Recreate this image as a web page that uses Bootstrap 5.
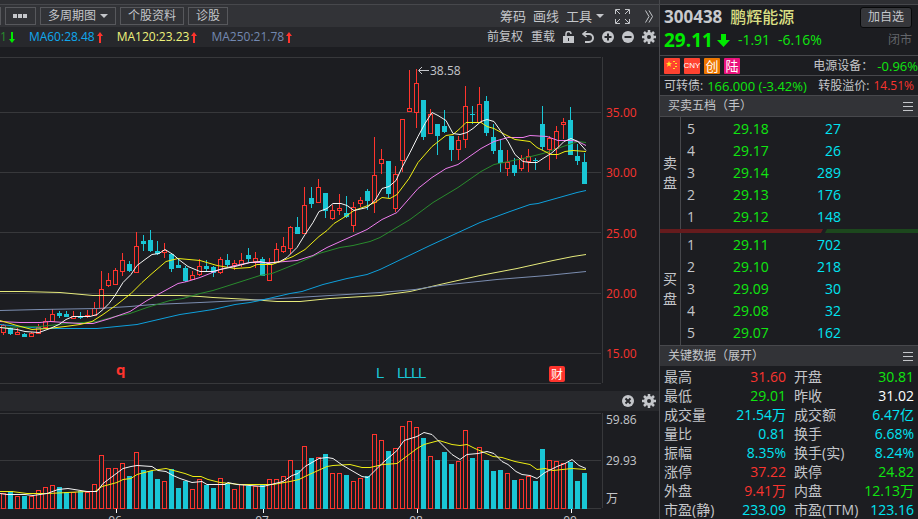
<!DOCTYPE html>
<html lang="zh-CN" data-bs-theme="dark">
<head>
<meta charset="utf-8">
<meta name="viewport" content="width=device-width, initial-scale=1">
<title>鹏辉能源 300438</title>
<link href="https://cdn.jsdelivr.net/npm/bootstrap@5.3.0/dist/css/bootstrap.min.css" rel="stylesheet">
<style>
:root{--bg:#1c1d21;--bar:#323337;--sub:#27282c;--line:#47484c;--txt:#c4c6ca;--up:#ff342d;--down:#10e610;--cyan:#00e4f2}
body{background:var(--bg);color:var(--txt);font:12px/16px "Open Sans","Noto Sans CJK SC",sans-serif;min-height:100vh;overflow:hidden}
button{background:none;border:0;padding:0;color:inherit;font:inherit;display:inline-flex;align-items:center}
svg{display:block}
table{width:100%;border-collapse:collapse}
.strip{height:5px;background:#2e2f33;border-bottom:1px solid var(--line)}
.toolbar{height:22px;background:var(--bar);gap:4px}
.tool{border:1px solid #57585c;height:18px;line-height:16px;padding:0 7px;color:var(--txt)}
.stub{width:1px;height:18px;background:#57585c}
.links{gap:7px;font-size:13px;padding-right:6px}
.subbar{height:20px;background:var(--sub)}
.icons{padding-right:3px}
.legend-ma{gap:14px}
.arrow{width:6px;height:11px;margin-left:2px}
.side{width:259px;border-left:1px solid var(--line)}
.head{height:50px;padding:1px 6px 0 4px}
.code{font-size:17px;line-height:22px;font-weight:700;color:#c8cace}
.stock{font-size:16px;line-height:22px;font-weight:500;color:#d9df83}
.last{font-size:19px;line-height:24px;font-weight:700;color:#00ea00}
.add{border:1px solid #08090a;border-radius:3px;background:#35363a;height:21px;width:52px;justify-content:center}
.closed{color:#63656a}
.line20{height:20px;border-top:1px solid var(--line)}
.tag{width:16px;height:16px;border-radius:1px;color:#fff;font-size:13px;line-height:16px;display:flex;align-items:center;justify-content:center;background:#ff4230}
.tag-cny{font:8px/16px "Liberation Sans",sans-serif}
.tag-chuang{background:#ee7700}
.tag-lu{background:#ea127c}
.title{height:21px;background:var(--bar);border-top:1px solid var(--line);padding:0 5px 0 8px}
.book{border-top:1px solid var(--line);height:113px}
.book + .ratio + .book{border-top:0;height:112px}
.sidename{width:21px;border-right:1px solid var(--line);font-size:14px;line-height:20px;text-align:center}
.levels{font-size:14px;line-height:22px;margin:1px 0}
.levels td{padding:0}
.levels .lv{width:52px;padding-left:6px}
.levels .pr{width:36px;color:var(--down)}
.levels .qt{width:72px;text-align:right;color:var(--cyan)}
.ratio{height:4px}
.ratio svg{width:100%;height:4px}
.facts{font-size:14px;line-height:19px;table-layout:fixed;margin-top:1px}
.facts th{font-weight:400;padding:0;white-space:nowrap}
.facts td{padding:0;text-align:right;white-space:nowrap}
.facts .c-name{width:56px}.facts .c-val{width:66px}.facts .c-gap{width:8px}.facts .c-name2{width:67px}
.f13{font-size:13px}.f14{font-size:14px}
.up{color:#f8342f}.down{color:var(--down)}.cy{color:var(--cyan)}.wh{color:#fff}
.chart{width:100%;height:auto}
.chart text{font-size:12px}
</style>
</head>
<body>
<main class="d-flex">
<section class="flex-grow-1" aria-label="K线图">
  <div class="strip"></div>
  <div class="toolbar d-flex align-items-center">
    <span class="stub"></span>
    <button class="tool" aria-label="更多"><svg width="15" height="4" fill="currentColor"><path d="M0 0h4v4H0zM5 0h4v4H5zM10 0h4v4h-4z"/></svg></button>
    <button class="tool">多周期图<svg class="ms-1" width="8" height="4"><path d="M0 0h8L4 4z" fill="currentColor"/></svg></button>
    <button class="tool">个股资料</button>
    <button class="tool">诊股</button>
    <div class="links d-flex align-items-center ms-auto">
      <button>筹码</button><button>画线</button>
      <button>工具<svg class="ms-1" width="8" height="4"><path d="M0 0h8L4 4z" fill="currentColor"/></svg></button>
      <button class="ms-1" aria-label="全屏"><svg width="15" height="15" fill="none" stroke="currentColor"><path d="M.5 5V.5H5M10 .5h4.500V5M14.500 10v4.500H10M5 14.500H.5V10M1 1l4 4M14 1l-4 4M14 14l-4-4M1 14l4-4"/></svg></button>
      <button class="ms-2" aria-label="展开"><svg width="8" height="13" fill="none" stroke="currentColor"><path d="M.5.5l3.500 6-3.500 6M4 .5l3.500 6L4 12.500"/></svg></button>
    </div>
  </div>
  <div class="subbar d-flex align-items-center">
    <div class="legend-ma d-flex" id="legend"></div>
    <div class="icons d-flex align-items-center gap-2 ms-auto">
      <div class="d-flex gap-2"><button>前复权</button><button>重载</button></div>
      <button aria-label="锁定"><svg width="11" height="12"><path d="M3 5V3a2.500 2.500 0 0 1 5 0" fill="none" stroke="currentColor" stroke-width="1.500"/><path d="M0 5h11v7H0z" fill="currentColor"/><path d="M5 7h1v3H5z" fill="#27282c"/></svg></button>
      <button aria-label="撤销"><svg width="12" height="12" fill="none" stroke="currentColor" stroke-width="2"><path d="M2 3h5a4 4 0 0 1 0 8H3"/><path d="M4.500 0L1 3l3.500 3" stroke-width="1.500"/></svg></button>
      <button aria-label="放大"><svg width="12" height="12"><circle cx="6" cy="6" r="6" fill="currentColor"/><path d="M6 2.500v7M2.500 6h7" stroke="#27282c" stroke-width="2"/></svg></button>
      <button aria-label="缩小"><svg width="12" height="12"><circle cx="6" cy="6" r="6" fill="currentColor"/><path d="M2.500 6h7" stroke="#27282c" stroke-width="2"/></svg></button>
      <button aria-label="设置"><svg width="14" height="14" viewBox="-7 -7 14 14"><circle r="3.500" fill="none" stroke="currentColor" stroke-width="3"/><path d="M0-7V-4M0 7V4M-7 0h3M7 0H4M-5-5l2 2M5-5L3-3M-5 5l2-2M5 5L3 3" stroke="currentColor" stroke-width="2.500"/></svg></button>
    </div>
  </div>
  <svg class="chart" id="price" viewBox="0 47 659 344" role="img" aria-label="日K线"></svg>
  <div class="subbar icons d-flex align-items-center justify-content-end gap-2">
    <button aria-label="关闭"><svg width="12" height="12"><circle cx="6" cy="6" r="6" fill="currentColor"/><path d="M3.500 3.500l5 5M8.500 3.500l-5 5" stroke="#27282c" stroke-width="2"/></svg></button>
    <button aria-label="指标设置"><svg width="14" height="14" viewBox="-7 -7 14 14"><circle r="3.500" fill="none" stroke="currentColor" stroke-width="3"/><path d="M0-7V-4M0 7V4M-7 0h3M7 0H4M-5-5l2 2M5-5L3-3M-5 5l2-2M5 5L3 3" stroke="currentColor" stroke-width="2.500"/></svg></button>
  </div>
  <svg class="chart" id="volume" viewBox="0 411 659 108" role="img" aria-label="成交量"></svg>
</section>

<aside class="side flex-shrink-0">
  <div class="strip"></div>
  <div class="head">
    <div class="d-flex align-items-center">
      <span class="code">300438</span><span class="stock ms-2">鹏辉能源</span>
      <button class="add ms-auto">加自选</button>
    </div>
    <div class="d-flex align-items-center">
      <span class="last">29.11</span>
      <svg class="ms-1" width="13" height="13"><path d="M4 0h5v6h4l-6.500 7L0 6h4z" fill="#00ea00"/></svg>
      <span class="down f14 ms-2">-1.91</span><span class="down f14 ms-2">-6.16%</span>
      <span class="closed ms-auto">闭市</span>
    </div>
  </div>
  <div class="line20 d-flex align-items-center gap-1 ps-1">
    <span class="tag"><svg width="16" height="16" fill="#ffe628"><path d="M5 3l.9 2.100L8 5.200 6.300 6.500 7 8.700 5 7.400 3 8.700l.7-2.200L2 5.200l2.100-.1zM9 3h2v1H9zM11 5h2v1h-2zM11 8h2v1h-2zM9 10h2v1H9z"/></svg></span>
    <span class="tag tag-cny">CNY</span><span class="tag tag-chuang">创</span><span class="tag tag-lu">陆</span>
    <span class="ms-auto">电源设备：</span><span class="down f13 text-nowrap">-0.96%</span>
  </div>
  <div class="line20 d-flex align-items-center">
    <span class="ps-1">可转债:</span><span class="down f13 ms-1">166.000 (-3.42%)</span>
    <span class="ms-auto">转股溢价:</span><span class="up ms-1 pe-1">14.51%</span>
  </div>
  <div class="title d-flex align-items-center justify-content-between"><span>买卖五档（手）</span><button aria-label="菜单"><svg width="10" height="9" stroke="currentColor"><path d="M0 .5h10M0 4.500h10M0 8.500h10"/></svg></button></div>
  <div class="book d-flex">
    <div class="sidename d-flex flex-column justify-content-center"><span>卖</span><span>盘</span></div>
    <div class="flex-grow-1"><table class="levels" id="asks"></table></div>
  </div>
  <div class="ratio"><svg viewBox="0 0 258 4" preserveAspectRatio="none"><path d="M0 0h163l-2 4H0z" fill="#651b1d"/><path d="M167 0h91v4h-93z" fill="#1c471d"/></svg></div>
  <div class="book d-flex">
    <div class="sidename d-flex flex-column justify-content-center"><span>买</span><span>盘</span></div>
    <div class="flex-grow-1"><table class="levels" id="bids"></table></div>
  </div>
  <div class="title d-flex align-items-center justify-content-between"><span>关键数据（展开）</span><button aria-label="菜单"><svg width="10" height="9" stroke="currentColor"><path d="M0 .5h10M0 4.500h10M0 8.500h10"/></svg></button></div>
  <div class="ps-1"><table class="facts"><colgroup><col class="c-name"><col class="c-val"><col class="c-gap"><col class="c-name2"><col></colgroup><tbody id="facts"></tbody></table></div>
</aside>
</main>
<script src="https://cdn.jsdelivr.net/npm/bootstrap@5.3.0/dist/js/bootstrap.bundle.min.js"></script>
<script>
const UP='#ff342d', DOWN='#19c6d5', GRID='#37383b';
// direction, high, body top, body bottom, low, volume top
const bars=`u 324 325 333 335 493|d 327 328 334 335 491|u 328 332 335 335 496|d 333 334 337 337 496|u 332 333 337 337 496|u 324 327 334 334 490|u 318 321 328 328 487|u 309 314 322 322 485|d 311 313 316 318 487|d 311 314 317 317 492|u 311 316 319 319 492|d 312 316 318 319 491|u 310 315 317 318 492|u 302 308 316 316 484|u 271 289 309 309 455|u 273 280 286 287 468|u 268 270 285 285 468|u 253 260 272 276 463|d 261 264 271 272 476|u 232 246 273 273 452|d 235 241 244 251 470|d 230 240 251 252 471|d 241 251 254 255 479|u 243 250 253 258 481|d 253 254 269 272 469|d 259 265 268 268 488|d 266 268 281 282 481|u 271 275 280 280 489|u 259 266 275 276 479|d 260 266 269 271 485|d 266 267 273 277 488|u 257 259 273 274 478|d 254 260 265 268 483|u 260 263 266 270 489|u 253 260 265 267 484|d 248 255 259 262 486|u 252 258 262 268 486|d 257 259 276 276 485|u 258 264 281 281 479|u 243 249 263 263 479|u 237 246 252 253 476|u 226 227 249 254 460|d 217 227 234 234 470|u 187 205 234 234 446|d 187 198 204 208 458|u 179 187 203 203 457|d 193 193 211 218 454|u 205 210 219 220 473|u 194 208 211 215 473|d 196 213 217 218 475|u 202 207 226 232 481|u 197 200 204 207 478|d 189 191 201 210 476|u 137 175 203 213 434|u 149 159 164 174 440|d 161 161 194 198 451|u 166 174 209 212 448|u 119 119 161 172 426|u 70 108 112 112 421|u 69 83 113 128 427|d 100 100 137 140 438|u 109 114 134 134 456|d 124 124 136 155 460|d 110 126 132 133 452|d 136 136 150 161 464|u 136 140 150 160 461|u 86 106 140 148 430|d 106 114 115 124 458|u 87 104 123 123 447|d 96 101 133 136 460|d 124 137 151 154 471|d 139 150 163 172 470|u 150 162 169 176 473|d 158 165 173 176 480|u 155 158 169 171 479|u 149 156 162 172 476|d 158 160 161 170 481|d 106 124 147 150 449|u 136 138 150 170 460|u 126 131 149 159 461|u 118 122 125 139 463|d 107 120 155 155 462|d 144 156 161 165 481|d 153 162 184 184 473`.split('|').map(s=>s.split(' '));
const averages={
 '#e6ea7c':'0,291 23,291 60,292 93,295 180,295 200,296 213,297 250,299 277,301 300,301 330,298 380,295 410,291 440,284 480,275 517,268 553,260 573,256 586,254',
 '#7b8db0':'0,310 40,309 97,308 130,306 153,304 200,302 263,299 330,295 380,292 415,289 440,285 497,279 547,275 586,271',
 '#0e9fdb':'0,324 20,326 43,328 97,328 137,324 167,317 180,314 200,311 213,309 235,304 250,302 260,300 290,293 302,291 323,284 347,278 367,274 380,269 430,245 480,222 510,211 530,204 538,203 577,192 586,190',
 '#298b2d':'0,327 40,326 67,323 97,321 115,316 130,313 147,307 170,300 183,298 200,293 213,290 235,283 260,275 272,273 297,263 319,253 340,247 353,245 370,241 380,237 410,219 433,202 458,187 481,171 494,164 523,158 543,153 563,146 572,143 578,141 586,142',
 '#ee7dee':'0,321 20,322 40,322 50,321 80,323 93,323 110,318 130,311 147,300 167,289 178,283 187,281 200,277 220,269 235,265 250,262 273,262 297,260 313,255 327,247 347,238 367,229 382,219 397,212 418,188 432,177 446,168 458,164 481,148 494,141 508,137 523,137 530,135 547,136 558,140 572,140 578,141 586,145',
 '#eeee14':'0,320 17,325 32,329 48,328 65,326 80,324 92,321 103,314 117,304 131,293 142,282 152,273 166,261 178,258 200,260 217,265 235,268 250,267 257,264 272,264 283,260 293,256 305,249 319,236 327,230 334,223 347,215 354,210 368,205 375,202 382,197 390,198 397,194 409,178 418,162 432,146 446,135 453,134 460,128 466,122 481,122 487,126 494,128 503,133 515,139 530,141 537,147 551,154 558,154 565,151 573,150 586,151',
 '#f4f4f4':'0,327 17,329 25,331 39,332 50,328 59,324 66,319 73,316 90,316 97,314 103,309 109,303 115,295 123,282 131,274 137,265 145,259 152,254 159,253 165,249 173,254 180,260 188,266 200,271 213,271 220,269 235,266 250,262 260,261 268,263 280,261 287,257 297,247 305,234 313,222 319,211 327,208 333,203 341,203 347,205 354,210 367,207 375,200 382,188 389,186 396,180 402,167 410,152 418,136 425,123 432,112 438,115 446,120 453,133 460,134 467,132 473,128 481,121 487,119 494,121 501,131 508,141 515,154 523,161 530,162 537,162 543,158 551,153 558,147 564,141 571,138 578,141 586,150'};
const volAverages={
 '#eeee14':'0,491 12,491 27,493 48,493 87,491 95,491 102,486 117,482 123,479 131,478 137,474 152,470 166,468 185,473 193,476 201,476 208,479 220,482 240,484 273,484 290,481 299,479 307,475 327,466 333,465 350,464 362,467 370,467 383,464 397,463 417,448 424,444 439,440 452,444 460,445 467,444 475,448 493,456 502,457 515,461 530,464 537,469 545,468 553,470 572,468 586,469',
 '#f4f4f4':'0,493 7,494 25,494 33,495 47,493 58,489 68,488 87,491 97,491 103,483 123,468 131,466 137,465 152,466 158,470 166,471 173,475 180,478 192,482 202,481 207,484 225,484 228,482 237,484 263,486 283,481 292,475 298,473 305,466 319,458 327,457 333,458 343,465 362,476 368,477 382,463 397,450 404,440 417,436 424,432 432,434 437,439 452,454 460,459 467,454 478,453 487,451 494,453 502,461 508,464 516,471 522,474 530,475 537,478 545,472 557,466 565,463 572,459 579,465 586,468'};
const hline=y=>`<path d="M0 ${y}.5h601" stroke="${GRID}"/>`;
const poly=o=>Object.entries(o).map(([c,p])=>`<polyline points="${p}" fill="none" stroke="${c}" transform="translate(0 .5)"/>`).join('');
const body=(d,x,t,b)=>d==='u'?`<rect x="${x-1.5}" y="${t+.5}" width="4" height="${Math.max(1,b-t-1)}" fill="#1c1d21" stroke="${UP}"/>`:`<rect x="${x-2}" y="${t}" width="5" height="${b-t}" fill="${DOWN}"/>`;
let p=[57,112,172,232,293,353,383].map(hline).join('')+`<path d="M602.5 57v326" stroke="${GRID}"/>`;
let v=[413,460,508].map(hline).join('')+`<path d="M602.5 413v95" stroke="${GRID}"/>`;
bars.forEach((r,i)=>{const d=r[0],[h,t,b,l,vol]=r.slice(1).map(Number),x=3+7*i;
 p+=`<path d="M${x+.5} ${h}V${l}" stroke="${d==='u'?UP:DOWN}"/>`+body(d,x,t,b);
 v+=body(d,x,vol,509);});
p+=poly(averages);v+=poly(volAverages);
[[35,117],[30,177],[25,238],[20,298],[15,358]].forEach(([n,y])=>p+=`<text x="606" y="${y}" fill="#f8342f">${n}.00</text>`);
p+=`<path d="M429 70.500H419M422 67l-3.500 3.500L422 74" fill="none" stroke="#c4c6ca"/><text x="430" y="75" fill="#c4c6ca">38.58</text>`
 +`<text x="116" y="375" fill="${UP}" style="font-size:15px;font-weight:700">q</text>`
 +`<text x="376 397 404 411 418" y="378" fill="${DOWN}" style="font-size:15px;font-family:'Liberation Sans',sans-serif">LLLLL</text>`
 +`<rect x="549" y="366" width="16" height="16" rx="2" fill="${UP}"/><text x="551" y="379" fill="#fff">财</text>`;
v+=`<text x="606" y="424" fill="#c4c6ca">59.86</text><text x="606" y="465" fill="#c4c6ca">29.93</text><text x="606" y="503" fill="#c4c6ca">万</text>`;
[[116,'06'],[263,'07'],[417,'08'],[571,'09']].forEach(([x,t])=>v+=`<path d="M${x}.5 509v4" stroke="#fff"/><text x="${x-1}" y="525" text-anchor="middle" fill="#c4c6ca">${t}</text>`);
price.innerHTML=p;volume.innerHTML=v;

const arrow=up=>`<svg class="arrow d-inline-block" viewBox="0 0 6 11"><path d="${up?'M2 11V4H0l3-4 3 4H4v7z':'M2 0v7H0l3 4 3-4H4V0z'}" fill="${up?UP:'#00ea00'}"/></svg>`;
legend.innerHTML=[['1','#298b2d',0],['MA60:28.48','#10a8ee',1],['MA120:23.23','#eef27c',1],['MA250:21.78','#7388b0',1]].map(([t,c,u])=>`<span class="text-nowrap" style="color:${c}">${t}${arrow(u)}</span>`).join('');
const levels=a=>'<tbody>'+a.map(r=>`<tr><td class="lv">${r[0]}</td><td class="pr">${r[1]}</td><td class="qt">${r[2]}</td><td></td></tr>`).join('')+'</tbody>';
asks.innerHTML=levels([[5,'29.18',27],[4,'29.17',26],[3,'29.14',289],[2,'29.13',176],[1,'29.12',148]]);
bids.innerHTML=levels([[1,'29.11',702],[2,'29.10',218],[3,'29.09',30],[4,'29.08',32],[5,'29.07',162]]);
facts.innerHTML=[['最高','31.60','up','开盘','30.81','down'],['最低','29.01','down','昨收','31.02','wh'],['成交量','21.54万','cy','成交额','6.47亿','cy'],['量比','0.81','cy','换手','6.68%','cy'],['振幅','8.35%','cy','换手(实)','8.24%','cy'],['涨停','37.22','up','跌停','24.82','down'],['外盘','9.41万','up','内盘','12.13万','down'],['市盈(静)','233.09','cy','市盈(TTM)','123.16','cy']].map(r=>`<tr><th scope="row">${r[0]}</th><td class="${r[2]}">${r[1]}</td><td></td><th scope="row">${r[3]}</th><td class="${r[5]} pe-1">${r[4]}</td></tr>`).join('');
</script>
</body>
</html>
